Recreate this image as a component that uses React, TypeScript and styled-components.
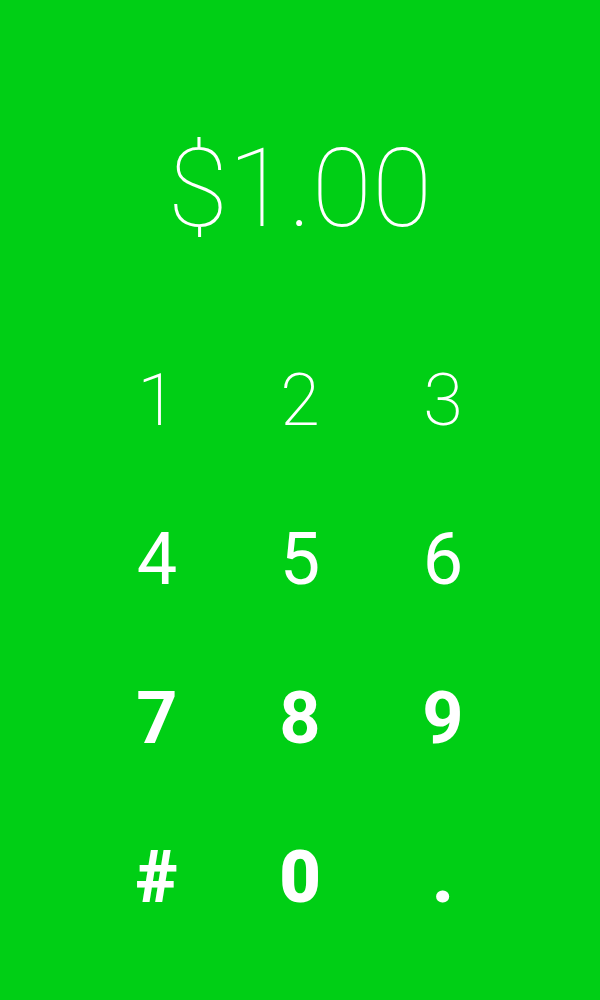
import React from "react";
import styled, { createGlobalStyle } from "styled-components";

const Global = createGlobalStyle`
  html, body { margin: 0; padding: 0; background: #00cf15; }
  body { font-family: Roboto, "Noto Sans", sans-serif; }
`;

const Screen = styled.div`
  width: 600px;
  height: 1000px;
  background: #00cf15;
  color: #ffffff;
  display: flex;
  flex-direction: column;
  align-items: center;
  padding-top: 134px;
  box-sizing: border-box;
  overflow: hidden;
`;

const Amount = styled.div`
  font-family: Roboto, sans-serif;
  font-weight: 100;
  font-size: 110px;
  line-height: 1;
  height: 110px;
  text-align: center;
`;

const Pad = styled.div`
  margin-top: 121px;
  display: grid;
  grid-template-columns: repeat(3, 143px);
  grid-auto-rows: 159px;
`;

const Key = styled.button<{ $weight: number }>`
  all: unset;
  font-family: Roboto, sans-serif;
  font-size: 72px;
  line-height: 1;
  height: 72px;
  font-weight: ${(p) => p.$weight};
  text-align: center;
  color: #ffffff;
  cursor: pointer;
`;

const rows: { keys: string[]; weight: number }[] = [
  { keys: ["1", "2", "3"], weight: 200 },
  { keys: ["4", "5", "6"], weight: 400 },
  { keys: ["7", "8", "9"], weight: 700 },
  { keys: ["#", "0", "."], weight: 900 },
];

export default function App() {
  return (
    <>
      <Global />
      <Screen>
        <Amount>$1.00</Amount>
        <Pad>
          {rows.map((r) =>
            r.keys.map((k) => (
              <Key key={k} $weight={r.weight}>
                {k}
              </Key>
            ))
          )}
        </Pad>
      </Screen>
    </>
  );
}
